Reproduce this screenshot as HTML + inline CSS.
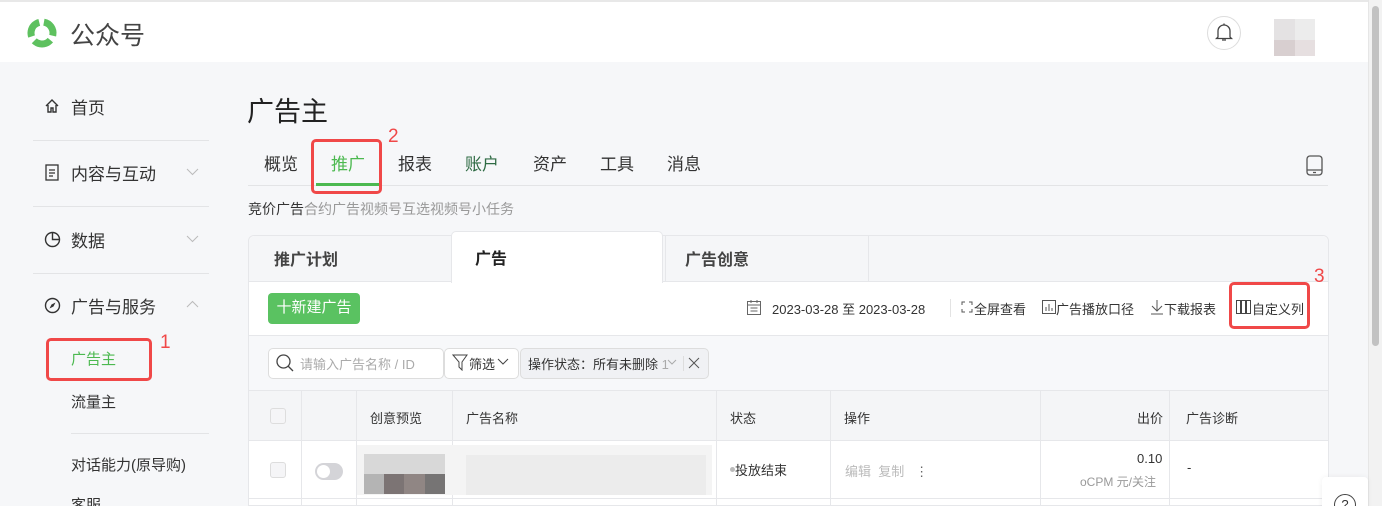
<!DOCTYPE html>
<html><head><meta charset="utf-8">
<style>
*{margin:0;padding:0;box-sizing:border-box}
html,body{width:1382px;height:506px;overflow:hidden}
body{background:#f6f7f9;font-family:"Liberation Sans","Noto Sans CJK SC",sans-serif;color:#333;position:relative}
.a{position:absolute;white-space:nowrap}
.hdr{left:0;top:0;width:1368px;height:62px;background:#fff;border-top:2px solid #e8e8e8}
.sb{left:1368px;top:0;width:14px;height:506px;background:#f2f2f2;border-left:1px solid #e6e6e6}
.sbt{left:1372px;top:6px;width:7px;height:340px;background:#c2c2c2;border-radius:4px}
.nav{font-size:17px;color:#333}
.line{height:1px;background:#e3e4e6}
.red{border:3px solid #f04848;border-radius:5px}
.rn{color:#f04848;font-size:19px}
.t{font-size:17px;color:#333}
.cell{border-right:1px solid #e6e7ea}
.th{font-size:13px;color:#333}
</style></head><body>
<div class="a hdr"></div>
<svg class="a" style="left:25px;top:16px" width="36" height="36" viewBox="0 0 36 36">
<g fill="none" stroke="#5ec15f" stroke-width="7" transform="rotate(-80 17 17)">
<circle cx="17" cy="17" r="11" stroke-dasharray="18 5"/>
</g>
</svg>
<div class="a" style="left:70px;top:16px;font-size:25px;color:#444">公众号</div>
<div class="a" style="left:1207px;top:16px;width:34px;height:34px;border:1px solid #ddd;border-radius:50%"></div>
<svg class="a" style="left:1215px;top:22px" width="18" height="20" viewBox="0 0 18 20"><path d="M3 15V9a6 6 0 0 1 12 0v6l1.5 1.5h-15zM7 18h4" stroke="#444" stroke-width="1.3" fill="none"/><path d="M9 1.5v1.5" stroke="#444" stroke-width="1.3"/></svg>
<div class="a" style="left:1274px;top:19px;width:21px;height:21px;background:#e4e2e3"></div>
<div class="a" style="left:1295px;top:19px;width:20px;height:21px;background:#ececec"></div>
<div class="a" style="left:1274px;top:40px;width:21px;height:16px;background:#d8cfd0"></div>
<div class="a" style="left:1295px;top:40px;width:20px;height:16px;background:#e6dfe0"></div>
<div class="a sb"></div><div class="a sbt"></div>

<!-- sidebar -->
<svg class="a" style="left:44px;top:98px" width="16" height="16" viewBox="0 0 16 16"><path d="M2 8L8 2l6 6M4 7v7h3v-4h2v4h3V7" stroke="#333" stroke-width="1.4" fill="none"/></svg>
<div class="a nav" style="left:71px;top:94px">首页</div>
<div class="a line" style="left:33px;top:140px;width:176px"></div>
<svg class="a" style="left:45px;top:164px" width="14" height="17" viewBox="0 0 14 17"><rect x="1" y="1" width="12" height="15" stroke="#333" stroke-width="1.3" fill="none"/><path d="M4 6h6M4 9h6M4 12h4" stroke="#333" stroke-width="1.2"/></svg>
<div class="a nav" style="left:71px;top:160px">内容与互动</div>
<svg class="a" style="left:186px;top:168px" width="13" height="8"><path d="M1 1l5.5 5.5L12 1" stroke="#bbb" fill="none"/></svg>
<div class="a line" style="left:33px;top:206px;width:176px"></div>
<svg class="a" style="left:44px;top:231px" width="17" height="17" viewBox="0 0 17 17"><circle cx="8.5" cy="8.5" r="7" stroke="#333" stroke-width="1.4" fill="none"/><path d="M8.5 1.5v7h7" stroke="#333" stroke-width="1.4" fill="none"/></svg>
<div class="a nav" style="left:71px;top:227px">数据</div>
<svg class="a" style="left:186px;top:235px" width="13" height="8"><path d="M1 1l5.5 5.5L12 1" stroke="#bbb" fill="none"/></svg>
<div class="a line" style="left:33px;top:273px;width:176px"></div>
<svg class="a" style="left:44px;top:297px" width="17" height="17" viewBox="0 0 17 17"><circle cx="8.5" cy="8.5" r="7" stroke="#333" stroke-width="1.4" fill="none"/><path d="M11.5 5.5L9.5 9.5 5.5 11.5 7.5 7.5z" fill="#333"/></svg>
<div class="a nav" style="left:71px;top:293px">广告与服务</div>
<svg class="a" style="left:186px;top:300px" width="13" height="8"><path d="M1 7l5.5-5.5L12 7" stroke="#bbb" fill="none"/></svg>
<div class="a red" style="left:46px;top:338px;width:106px;height:43px"></div>
<div class="a" style="left:71px;top:348px;font-size:15px;color:#4cb950">广告主</div>
<div class="a rn" style="left:160px;top:332px">1</div>
<div class="a" style="left:71px;top:391px;font-size:15px">流量主</div>
<div class="a line" style="left:71px;top:433px;width:138px"></div>
<div class="a" style="left:71px;top:454px;font-size:15px">对话能力(原导购)</div>
<div class="a" style="left:71px;top:494px;font-size:15px">客服</div>

<!-- main header -->
<div class="a" style="left:247px;top:90px;font-size:27px;color:#222">广告主</div>
<div class="a t" style="left:264px;top:150px">概览</div>
<div class="a t" style="left:331px;top:150px;color:#4cb950">推广</div>
<div class="a t" style="left:398px;top:150px">报表</div>
<div class="a t" style="left:465px;top:150px;color:#2f6b44">账户</div>
<div class="a t" style="left:533px;top:150px">资产</div>
<div class="a t" style="left:600px;top:150px">工具</div>
<div class="a t" style="left:667px;top:150px">消息</div>
<div class="a line" style="left:248px;top:185px;width:1080px"></div>
<div class="a" style="left:316px;top:183px;width:64px;height:3px;background:#4cb950"></div>
<div class="a red" style="left:311px;top:139px;width:71px;height:55px"></div>
<div class="a rn" style="left:388px;top:126px">2</div>
<svg class="a" style="left:1306px;top:155px" width="17" height="21" viewBox="0 0 17 21"><rect x="1" y="1" width="15" height="19" rx="3" stroke="#555" stroke-width="1.3" fill="none"/><path d="M1 15h15M7 17.5h3" stroke="#555" stroke-width="1.3"/></svg>
<div class="a" style="left:248px;top:199px;font-size:14px;color:#333">竞价广告<span style="color:#999">合约广告视频号互选视频号小任务</span></div>

<!-- panel -->
<div class="a" style="left:248px;top:235px;width:1081px;height:271px;background:#fff;border:1px solid #e6e7ea;border-radius:6px 6px 0 0"></div>
<div class="a" style="left:249px;top:236px;width:1079px;height:46px;background:#f5f6f8;border-bottom:1px solid #e6e7ea;border-radius:6px 6px 0 0"></div>
<div class="a" style="left:451px;top:231px;width:212px;height:52px;background:#fff;border:1px solid #e6e7ea;border-bottom:none;border-radius:5px 5px 0 0"></div>
<div class="a" style="left:665px;top:236px;width:1px;height:46px;background:#e6e7ea"></div>
<div class="a" style="left:868px;top:236px;width:1px;height:46px;background:#e6e7ea"></div>
<div class="a" style="left:274px;top:246px;font-size:16px;font-weight:bold;color:#444">推广计划</div>
<div class="a" style="left:475px;top:245px;font-size:16px;font-weight:bold;color:#222">广告</div>
<div class="a" style="left:685px;top:246px;font-size:16px;font-weight:bold;color:#444">广告创意</div>

<div class="a" style="left:268px;top:293px;width:92px;height:31px;background:#5ac261;border-radius:4px;color:#fff;font-size:15px;line-height:30px;text-align:center">十新建广告</div>
<svg class="a" style="left:746px;top:299px" width="16" height="17" viewBox="0 0 16 17"><rect x="1.5" y="2.5" width="13" height="13" stroke="#666" fill="none"/><path d="M1.5 6h13M5 1v3M11 1v3M4.5 9h7M4.5 12h7" stroke="#666"/></svg>
<div class="a" style="left:772px;top:299px;font-size:13px;color:#333">2023-03-28 至 2023-03-28</div>
<div class="a" style="left:950px;top:299px;width:1px;height:18px;background:#e3e3e3"></div>
<svg class="a" style="left:961px;top:301px" width="12" height="12"><path d="M1 4V1h3M8 1h3v3M11 8v3H8M4 11H1V8" stroke="#555" fill="none"/></svg>
<div class="a" style="left:974px;top:299px;font-size:13px">全屏查看</div>
<svg class="a" style="left:1042px;top:300px" width="14" height="14"><rect x=".5" y=".5" width="13" height="13" stroke="#555" fill="none"/><path d="M4 11V7M7 11V4M10 11V8" stroke="#555"/></svg>
<div class="a" style="left:1056px;top:299px;font-size:13px">广告播放口径</div>
<svg class="a" style="left:1150px;top:299px" width="14" height="16"><path d="M7 1v11M2 7l5 5 5-5M1 15h12" stroke="#555" fill="none"/></svg>
<div class="a" style="left:1164px;top:299px;font-size:13px">下载报表</div>
<svg class="a" style="left:1236px;top:300px" width="16" height="14"><rect x=".5" y=".5" width="4" height="13" stroke="#444" fill="none"/><rect x="5.5" y=".5" width="4" height="13" stroke="#444" fill="none"/><rect x="10.5" y=".5" width="4" height="13" stroke="#444" fill="none"/></svg>
<div class="a" style="left:1252px;top:299px;font-size:13px">自定义列</div>
<div class="a red" style="left:1229px;top:282px;width:81px;height:47px"></div>
<div class="a rn" style="left:1314px;top:266px">3</div>

<div class="a" style="left:249px;top:335px;width:1079px;height:106px;background:#f7f8fa;border-top:1px solid #e6e7ea"></div>
<div class="a" style="left:268px;top:348px;width:176px;height:31px;background:#fff;border:1px solid #ddd;border-radius:5px"></div>
<svg class="a" style="left:275px;top:353px" width="20" height="20"><circle cx="8.5" cy="8.5" r="6.5" stroke="#444" stroke-width="1.3" fill="none"/><path d="M13 13l5 5" stroke="#444" stroke-width="1.3"/></svg>
<div class="a" style="left:300px;top:354px;font-size:13px;color:#aaa">请输入广告名称 / ID</div>
<div class="a" style="left:444px;top:348px;width:75px;height:31px;background:#fff;border:1px solid #ddd;border-radius:5px"></div>
<svg class="a" style="left:452px;top:354px" width="16" height="17"><path d="M1 1h14l-5 7v8l-3-3V8z" stroke="#444" fill="none"/></svg>
<div class="a" style="left:469px;top:354px;font-size:13px">筛选</div>
<svg class="a" style="left:497px;top:358px" width="12" height="8"><path d="M1 1l5 5 5-5" stroke="#444" fill="none"/></svg>
<div class="a" style="left:520px;top:348px;width:189px;height:31px;background:#f0f1f4;border:1px solid #ddd;border-radius:5px"></div>
<div class="a" style="left:528px;top:354px;font-size:13px">操作状态：所有未删除 <span style="color:#aaa">1</span></div>
<svg class="a" style="left:667px;top:359px" width="10" height="6"><path d="M1 1l4 4 4-4" stroke="#aaa" fill="none"/></svg>
<div class="a" style="left:683px;top:356px;width:1px;height:15px;background:#ddd"></div>
<svg class="a" style="left:688px;top:357px" width="12" height="12"><path d="M1 1l10 10M11 1L1 11" stroke="#555"/></svg>

<div class="a" style="left:249px;top:390px;width:1079px;height:51px;background:#f4f5f7;border-top:1px solid #e6e7ea;border-bottom:1px solid #e6e7ea"></div>
<div class="a" style="left:249px;top:498px;width:1079px;height:1px;background:#e6e7ea"></div>
<div class="a cell" style="left:249px;top:391px;width:53px;height:115px"></div>
<div class="a cell" style="left:302px;top:391px;width:55px;height:115px"></div>
<div class="a cell" style="left:357px;top:391px;width:96px;height:115px"></div>
<div class="a cell" style="left:453px;top:391px;width:264px;height:115px"></div>
<div class="a cell" style="left:717px;top:391px;width:114px;height:115px"></div>
<div class="a cell" style="left:831px;top:391px;width:210px;height:115px"></div>
<div class="a cell" style="left:1041px;top:391px;width:129px;height:115px"></div>
<div class="a" style="left:270px;top:408px;width:16px;height:16px;border:1px solid #ddd;border-radius:3px;background:#f5f5f7"></div>
<div class="a th" style="left:370px;top:408px">创意预览</div>
<div class="a th" style="left:466px;top:408px">广告名称</div>
<div class="a th" style="left:730px;top:408px">状态</div>
<div class="a th" style="left:844px;top:408px">操作</div>
<div class="a th" style="left:1137px;top:408px">出价</div>
<div class="a th" style="left:1186px;top:408px">广告诊断</div>

<div class="a" style="left:270px;top:462px;width:16px;height:16px;border:1px solid #ddd;border-radius:3px;background:#f5f5f7"></div>
<div class="a" style="left:315px;top:463px;width:28px;height:17px;border-radius:9px;background:#d4d4d8"></div>
<div class="a" style="left:317px;top:465px;width:13px;height:13px;border-radius:50%;background:#fff"></div>
<div class="a" style="left:357px;top:445px;width:355px;height:50px;background:#f4f4f4"></div>
<div class="a" style="left:364px;top:454px;width:81px;height:20px;background:#d8d8d8"></div>
<div class="a" style="left:364px;top:474px;width:20px;height:20px;background:#b4b4b4"></div>
<div class="a" style="left:384px;top:474px;width:20px;height:20px;background:#7c7474"></div>
<div class="a" style="left:404px;top:474px;width:21px;height:20px;background:#908684"></div>
<div class="a" style="left:425px;top:474px;width:20px;height:20px;background:#767474"></div>
<div class="a" style="left:466px;top:455px;width:240px;height:40px;background:#ececec"></div>
<div class="a" style="left:730px;top:467px;width:5px;height:5px;border-radius:50%;background:#bbb"></div>
<div class="a" style="left:735px;top:460px;font-size:13px">投放结束</div>
<div class="a" style="left:845px;top:461px;font-size:13px;color:#bbb">编辑 &nbsp;复制 &nbsp;&nbsp;<span style="color:#666">⋮</span></div>
<div class="a" style="left:1137px;top:451px;font-size:13px">0.10</div>
<div class="a" style="left:1080px;top:473px;font-size:12px;color:#999">oCPM 元/关注</div>
<div class="a" style="left:1187px;top:460px;font-size:13px">-</div>

<div class="a" style="left:1322px;top:477px;width:46px;height:40px;background:#fff;border-radius:4px;box-shadow:0 0 6px rgba(0,0,0,.06)"></div>
<div class="a" style="left:1334px;top:494px;width:22px;height:22px;border:1.5px solid #444;border-radius:50%;font-size:13px;text-align:center;line-height:20px">?</div>
</body></html>
